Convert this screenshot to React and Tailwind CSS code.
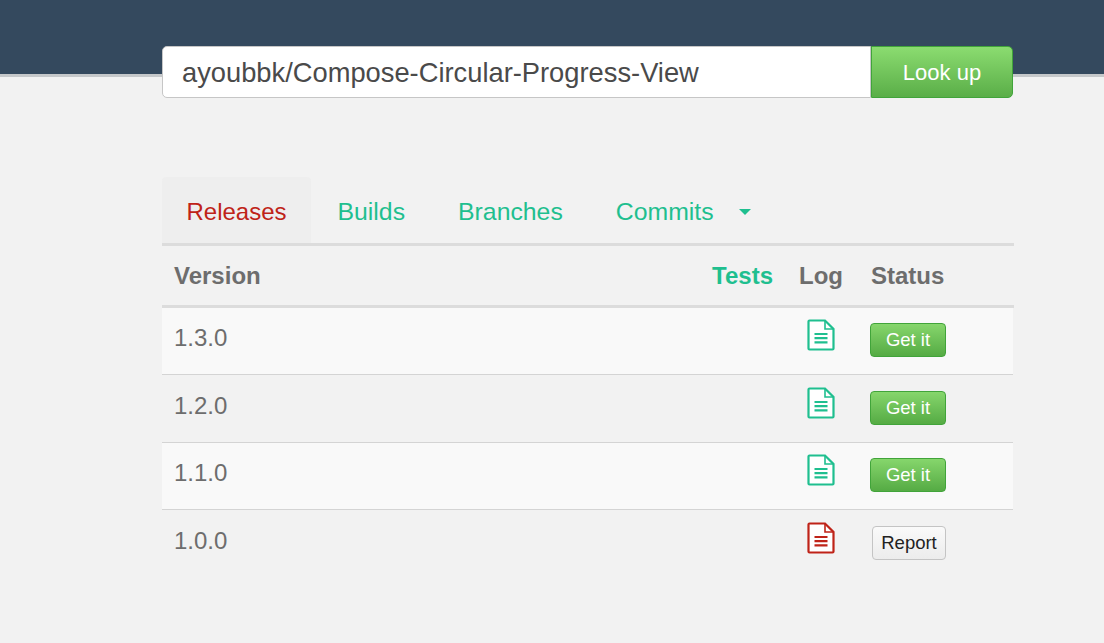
const RELEASES = [
  { version: "1.3.0", ok: true },
  { version: "1.2.0", ok: true },
  { version: "1.1.0", ok: true },
  { version: "1.0.0", ok: false },
];

const TABS = ["Builds", "Branches", "Commits"];

const LogIcon = ({ className }) => (
  <svg className={className} width="28" height="32" viewBox="0 0 28 32" fill="none" stroke="currentColor">
    <path d="M2.5 1.5H18L26.5 10V29.5Q26.5 30.5 25.5 30.5H2.5Q1.5 30.5 1.5 29.5V2.5Q1.5 1.5 2.5 1.5Z" strokeWidth="2.2" fill="#ffffff" />
    <path d="M18 2V10H26" strokeWidth="1.6" />
    <path d="M7.5 15H20.5M7.5 19.2H20.5M7.5 23.4H20.5" strokeWidth="2.2" />
  </svg>
);

const Row = ({ version, ok, striped, last }) => (
  <div className={`mr-[1px] grid h-[67.4px] grid-cols-[1fr_72px_142px] items-center ${last ? "" : "border-b border-[#d4d4d4]"} ${striped ? "bg-[#f9f9f9]" : ""}`}>
    <span className="pb-[6px] pl-3 text-2xl text-[#6d6d6d]">{version}</span>
    <div className="pb-[12px] pl-[8px]">
      <LogIcon className={ok ? "text-[#1fbf8f]" : "text-[#bf2318]"} />
    </div>
    <div className="pb-[2px]">
      {ok ? (
        <button className="-ml-[1px] h-[34px] w-[76px] rounded-[4px] border border-[#41a43a] bg-gradient-to-b from-[#86d66c] to-[#55ab44] text-[18.5px] text-white">
          Get it
        </button>
      ) : (
        <button className="ml-[1px] h-[34px] w-[74px] rounded-[4px] border border-[#c4c4c4] bg-gradient-to-b from-[#fafafa] to-[#ececec] text-[18.5px] text-[#222]">
          Report
        </button>
      )}
    </div>
  </div>
);

export default function App() {
  return (
    <div className="min-h-[643px] bg-[#f2f2f2] font-['Liberation_Sans',Arial,sans-serif]">
      <div className="h-[77px] border-b-[3px] border-[#c5c8ca] bg-[#34495e]" />

      <div className="ml-[162px] w-[852px]">
        <div className="-mt-[31px] mr-[1px] flex h-[52px]">
          <div className="flex flex-1 items-center rounded-l-[5px] border border-[#c6c6c6] bg-white pt-[3px] pl-[19px] text-[27.3px] text-[#4a4a4a]">
            ayoubbk/Compose-Circular-Progress-View
          </div>
          <button className="w-[142px] rounded-r-[5px] border border-[#41a43a] bg-gradient-to-b from-[#8bdc70] to-[#5aae48] text-[22px] text-white">
            Look up
          </button>
        </div>

        <div className="mt-[79px] flex h-[69px] items-stretch border-b-[3px] border-[#dcdcdc] text-[24.8px]">
          <div className="flex w-[149px] items-center justify-center rounded-t-[4px] bg-[#eeeeee] pt-[4px] text-2xl text-[#bf2318]">
            Releases
          </div>
          {TABS.map((tab) => (
            <div key={tab} className="flex items-center px-[26.5px] pt-[4px] first:pl-[28.5px] text-[#1fbf8f]">
              {tab}
            </div>
          ))}
          <div className="flex items-center pt-[4px]">
            <div className="-ml-[1px] h-0 w-0 border-x-[6px] border-t-[6px] border-x-transparent border-t-[#1fbf8f]" />
          </div>
        </div>

        <div className="grid h-[62px] grid-cols-[1fr_72px_143px] items-center border-b-[3px] border-[#dcdcdc] text-2xl font-bold text-[#6d6d6d]">
          <div className="flex justify-between pr-[26px]">
            <span className="pl-3">Version</span>
            <span className="text-[#1fbf8f]">Tests</span>
          </div>
          <span>Log</span>
          <span>Status</span>
        </div>

        {RELEASES.map((release, index) => (
          <Row
            key={release.version}
            {...release}
            striped={index % 2 === 0}
            last={index === RELEASES.length - 1}
          />
        ))}
      </div>
    </div>
  );
}
